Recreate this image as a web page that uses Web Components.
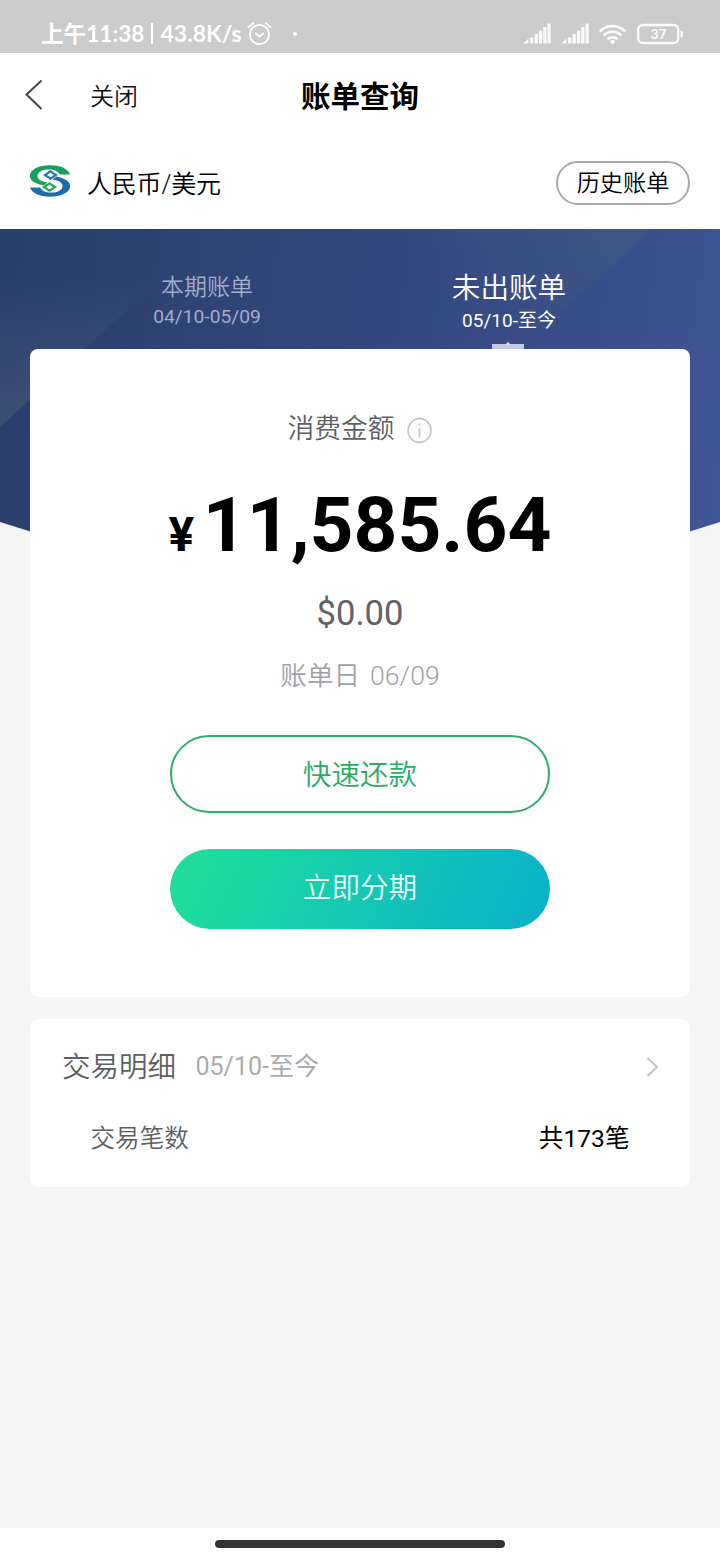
<!DOCTYPE html>
<html lang="zh-CN">
<head>
<meta charset="utf-8">
<title>账单查询</title>
<style>
  html, body { margin: 0; padding: 0; background: #f5f5f5; }
  body { font-family: Roboto, "Noto Sans CJK SC", sans-serif; color: #111; }
</style>
</head>
<body>
<bill-app></bill-app>
<script>
  const define = (name, html) => {
    const template = document.createElement('template');
    template.innerHTML = html;
    customElements.define(name, class extends HTMLElement {
      constructor() {
        super();
        this.attachShadow({ mode: 'open' }).appendChild(template.content.cloneNode(true));
      }
    });
  };

  define('status-bar', `
    <style>
      :host { display: flex; align-items: center; justify-content: space-between; height: 53px; box-sizing: border-box;
        padding: 14px 37.5px 0 41px; background: #cbcbcb; color: #fff; }
      .left, .right { display: flex; align-items: center; height: 39px; }
      .time, .speed { font: 700 23px/39px Lato, "Noto Sans CJK SC", sans-serif; white-space: nowrap; }
      .time { width: 105px; font-size: 22.600px; }
      .speed { width: 83px; }
      .rule { width: 1.5px; height: 21px; background: #fff; margin: 0 8px 0 5px; }
      .clock { margin-left: 3px; }
      .dot { width: 4px; height: 4px; border-radius: 2px; background: #fff; margin-left: 21px; }
      svg { display: block; }
      .right { gap: 9.5px; }
    </style>
    <div class="left">
      <span class="time">上午11:38</span><i class="rule"></i><span class="speed">43.8K/s</span>
      <svg class="clock" width="25" height="25" viewBox="0 0 25 25" fill="none" stroke="#fff" stroke-width="1.8" stroke-linecap="round" stroke-linejoin="round">
        <circle cx="12.5" cy="13.5" r="9.6"/><path d="M1.5 6.2 6.3 2M23.5 6.2 18.7 2M8.8 12.5l3.7 3 3.7-3"/>
      </svg>
      <i class="dot"></i>
    </div>
    <div class="right">
      <svg width="28" height="21" viewBox="0 0 28 21" fill="#fafafa"><path d="M0 20.500 5.500 15.500v5zM7 14.500h3.300v6H7zM11.500 11h3.300v9.500h-3.300zM15.900 7.500h3.300v13h-3.300zM20.200 4h3.300v16.500h-3.300zM24.500 .5h3.200v20h-3.200z"/></svg>
      <svg width="28" height="21" viewBox="0 0 28 21" fill="#fafafa"><path d="M0 20.500 5.500 15.500v5zM7 14.500h3.300v6H7zM11.500 11h3.300v9.500h-3.300zM15.900 7.500h3.300v13h-3.300zM20.200 4h3.300v16.500h-3.300zM24.500 .5h3.200v20h-3.200z"/></svg>
      <svg width="29" height="22" viewBox="0 0 30 22" fill="none" stroke="#fafafa" stroke-width="2.700"><path d="M1.800 8.400a18.500 18.500 0 0 1 26.400 0M5.800 12.600a12.700 12.700 0 0 1 18.400 0M9.900 16.500a7.300 7.300 0 0 1 10.200 0"/><circle cx="15" cy="19.200" r="2.200" fill="#fafafa" stroke="none"/></svg>
      <svg width="46" height="22" viewBox="0 0 46 22"><rect x="1.200" y="2" width="40" height="18" rx="4.500" fill="none" stroke="#fafafa" stroke-width="2.300"/><path d="M43.500 7.500q2.500 0 2.500 3.500t-2.500 3.500z" fill="#fafafa"/><text x="21.500" y="16.200" text-anchor="middle" font-family="Lato, sans-serif" font-weight="700" font-size="14" fill="#fafafa">37</text></svg>
    </div>
  `);

  define('nav-bar', `
    <style>
      :host { display: grid; grid-template-columns: 1fr auto 1fr; align-items: center; height: 86px; background: #fff; }
      .side { display: flex; align-items: center; }
      svg { display: block; margin: -2px 0 0 24px; }
      .close { font-size: 24px; font-weight: 350; line-height: 36px; margin-left: 47px; padding-top: 1px; color: #111; }
      h1 { margin: 0; font-size: 29.500px; line-height: 40px; padding-top: 1px; font-weight: 700; color: #000; }
    </style>
    <div class="side">
      <svg width="19" height="32" viewBox="0 0 19 32" fill="none" stroke="#444" stroke-width="2"><path d="M17.500 1.500 2.500 15.500 17.500 30"/></svg>
      <span class="close">关闭</span>
    </div>
    <h1><slot></slot></h1>
  `);

  define('account-bar', `
    <style>
      :host { display: flex; align-items: center; height: 90px; box-sizing: border-box; padding: 0 30px 2px 29px; background: #fff; }
      svg { display: block; margin-top: -4px; }
      .name { flex: 1; margin-left: 16px; font-size: 25px; font-weight: 350; line-height: 36px; padding-top: 4px; color: #000; letter-spacing: -.2px; }
      button { width: 134px; height: 44px; box-sizing: border-box; border: 2px solid #a9a9a9; border-radius: 22px; background: #fff;
        padding: 0; font: 350 23.200px/41px Roboto, "Noto Sans CJK SC", sans-serif; color: #000; }
    </style>
    <svg width="42" height="32" viewBox="0 0 42 32" fill="none">
      <path fill="#16a05a" d="M41 9.500C39 3.500 31 .3 21 .3 9 .3 .8 5 .8 11c0 4.500 5 7.500 13.700 9.500l4-3C12 16.500 8.500 14.500 8.500 11 8.500 7 13 4.400 20 4.400c6 0 8.500 1.600 11 5.100z"/>
      <path fill="#1c6cab" d="M1 22.500c2 6 10 9.200 20 9.200 12 0 20.200-4.700 20.200-10.700 0-4.500-5-7.500-13.700-9.500l-4 3c6.500 1 10 3 10 6.500 0 4-4.500 6.600-11.500 6.600-6 0-8.500-1.600-11-5.100z"/>
      <path stroke="#2178b5" stroke-width="2.200" d="m21.500 6.300 5.500 3.700-5.500 3.700L16 10z"/>
      <path stroke="#25a55c" stroke-width="2.200" d="m20.500 18.300 5.500 3.700-5.500 3.700L15 22z"/>
    </svg>
    <span class="name"><slot></slot></span>
    <button>历史账单</button>
  `);

  define('bill-tab', `
    <style>
      :host { display: flex; flex-direction: column; align-items: center; padding-top: 44px; color: #a3adc9; }
      .label { font-size: 23px; line-height: 30px; font-weight: 350; }
      .range { font-size: 19.200px; line-height: 20px; margin-top: 4px; }
      :host([active]) { color: #fff; padding-top: 42px; }
      :host([active]) .label { font-size: 28.600px; line-height: 34px; }
      :host([active]) .range { font-size: 19px; line-height: 22px; margin-top: 5px; }
    </style>
    <span class="label"><slot></slot></span>
    <span class="range"><slot name="range"></slot></span>
  `);

  define('bill-hero', `
    <style>
      :host { display: block; position: relative; }
      .bg { position: absolute; left: 0; top: 0; width: 720px; height: 360px; display: block; }
      .tabs { position: relative; display: grid; grid-template-columns: 1fr 1fr; height: 120px; padding: 0 60px 0 56px; }
      .marker { position: absolute; left: 492px; bottom: 0; display: block; }
      .body { position: relative; padding: 0 30px; display: flex; flex-direction: column; gap: 22px; }
    </style>
    <svg class="bg" viewBox="0 0 720 360">
      <defs>
        <linearGradient id="base" gradientUnits="userSpaceOnUse" x1="0" y1="100" x2="720" y2="220"><stop offset="0" stop-color="#2b3f6b"/><stop offset=".5" stop-color="#33477e"/><stop offset="1" stop-color="#3f5493"/></linearGradient>
        <linearGradient id="shade1" gradientUnits="userSpaceOnUse" x1="0" y1="50" x2="0" y2="190"><stop offset="0" stop-color="#5e6d80" stop-opacity="0"/><stop offset="1" stop-color="#5e6d80" stop-opacity=".34"/></linearGradient>
        <linearGradient id="shade2" gradientUnits="userSpaceOnUse" x1="500" y1="100" x2="600" y2="0"><stop offset="0" stop-color="#47607a" stop-opacity="0"/><stop offset="1" stop-color="#47607a" stop-opacity=".36"/></linearGradient>
      </defs>
      <path fill="url(#base)" d="M0 0H720V293Q540 352 360 352T0 293z"/>
      <path fill="url(#shade1)" d="M0 0H215L0 198z"/>
      <path fill="url(#shade2)" d="M400 0H652L520 120H360z"/>
    </svg>
    <div class="tabs">
      <bill-tab>本期账单<span slot="range">04/10-05/09</span></bill-tab>
      <bill-tab active>未出账单<span slot="range">05/10-至今</span></bill-tab>
      <svg class="marker" width="32" height="7" viewBox="0 0 32 7"><path fill="#c2cade" d="M0 2H32V7H0z"/><path fill="#e8ecf5" d="m16 0 2.500 2.500h-5z"/></svg>
    </div>
    <div class="body"><slot></slot></div>
  `);

  define('pill-button', `
    <style>
      :host { display: block; width: 380px; }
      button { display: block; width: 100%; height: 78px; box-sizing: border-box; padding: 1px 0 0; border: 2px solid #2fab6b; border-radius: 40px;
        background: #fff; color: #2bab66; font: 350 28.600px/74px Roboto, "Noto Sans CJK SC", sans-serif; }
      :host([primary]) button { height: 80px; border: 0; padding: 0 0 3px; color: #e9fffb; background: linear-gradient(115deg, #1fdc9c 8%, #09b4c8 92%); }
    </style>
    <button><slot></slot></button>
  `);

  define('summary-card', `
    <style>
      :host { display: flex; flex-direction: column; align-items: center; height: 648px; box-sizing: border-box; padding-top: 60px;
        background: #fff; border-radius: 8px; }
      .label { display: flex; align-items: center; height: 40px; font-size: 26.800px; font-weight: 350; line-height: 40px; color: #5c5f63; }
      .label svg { display: block; margin: 3px 1px 0 12px; }
      .amount { display: flex; align-items: baseline; margin-top: 31px; font-weight: 700; color: #000; line-height: 90px; height: 90px; }
      .sign { font-size: 48px; margin-right: 8.500px; }
      .value { font-size: 76.600px; }
      .usd { margin-top: 23px; font-size: 34.600px; line-height: 40px; color: #606266; }
      .due { display: flex; gap: 10px; margin-top: 25px; font-size: 26.600px; font-weight: 350; line-height: 36px; color: #a0a2a4; }
      .first { margin-top: 41px; }
      .second { margin-top: 36px; }
    </style>
    <div class="label">消费金额
      <svg width="25" height="27" viewBox="0 0 25 27" fill="none" stroke="#c4c8c8" stroke-width="1.800"><ellipse cx="12.500" cy="13.500" rx="11.400" ry="12"/><path stroke-width="1.8" d="M12.500 11v9.500M12.500 6.500v2.200"/></svg>
    </div>
    <div class="amount"><span class="sign">¥</span><span class="value">11,585.64</span></div>
    <div class="usd">$0.00</div>
    <div class="due"><span>账单日</span><span>06/09</span></div>
    <pill-button class="first">快速还款</pill-button>
    <pill-button class="second" primary>立即分期</pill-button>
  `);

  define('detail-card', `
    <style>
      :host { display: block; height: 168px; box-sizing: border-box; padding: 31px 31px 0 32px; background: #fff; border-radius: 8px; }
      .head, .row { display: flex; align-items: center; height: 36px; line-height: 36px; }
      .title { font-size: 28.500px; font-weight: 350; color: #5c5f63; }
      .range { flex: 1; margin: -2px 0 0 19.500px; font-size: 25px; color: #a9abad; }
      svg { display: block; margin-top: -2px; }
      .row { justify-content: space-between; margin-top: 35px; padding: 0 29.500px 0 28.500px; font-size: 24.600px; color: #5c5f63; }
      .row span:first-child { font-weight: 350; }
      .count { color: #000; }
    </style>
    <div class="head"><span class="title">交易明细</span><span class="range">05/10-至今</span>
      <svg width="13" height="20" viewBox="0 0 13 20" fill="none" stroke="#c4c6c6" stroke-width="2"><path d="m1.500 1 9.500 9-9.500 9"/></svg>
    </div>
    <div class="row"><span>交易笔数</span><span class="count">共173笔</span></div>
  `);

  define('home-indicator', `
    <style>
      :host { display: flex; justify-content: center; align-items: center; height: 32px; background: #fff; }
      i { width: 290px; height: 8px; border-radius: 4px; background: #333; }
    </style>
    <i></i>
  `);

  define('bill-app', `
    <style>
      :host { display: flex; flex-direction: column; width: 720px; height: 1560px; background: #f5f5f5; }
      bill-hero { flex: 1; }
    </style>
    <status-bar></status-bar>
    <nav-bar>账单查询</nav-bar>
    <account-bar>人民币/美元</account-bar>
    <bill-hero><summary-card></summary-card><detail-card></detail-card></bill-hero>
    <home-indicator></home-indicator>
  `);
</script>
</body>
</html>
